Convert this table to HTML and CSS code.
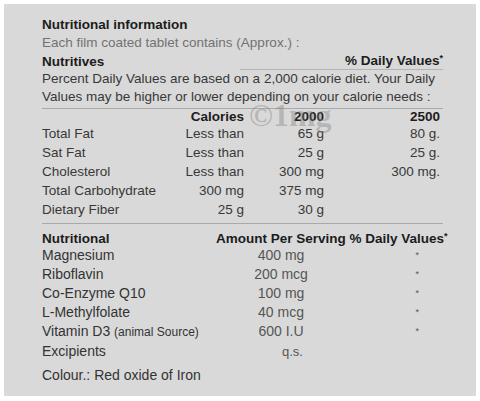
FILE: index.html
```html
<!DOCTYPE html>
<html lang="en">
  <head>
    <meta charset="UTF-8" />
    <meta name="viewport" content="width=device-width, initial-scale=1.0" />
    <title>Nutritional information</title>
    <link rel="stylesheet" href="styles.css">
  </head>
  <body>
    <div class="label">
      <div class="watermark">©1mg</div>

      <!-- Intro -->
      <div class="intro">
        <p class="title">Nutritional information</p>
        <p class="note">Each film coated tablet contains (Approx.) :</p>
        <div class="head-row">
          <span class="bold">Nutritives</span>
          <span class="dv">% Daily Values<span class="star">*</span></span>
        </div>
        <p class="text">Percent Daily Values are based on a 2,000 calorie diet. Your Daily</p>
        <p class="text">Values may be higher or lower depending on your calorie needs :</p>
      </div>

      <!-- Daily values table -->
      <div class="daily">
        <span class="hd"></span>
        <span class="hd num">Calories</span>
        <span class="hd num">2000</span>
        <span class="hd num">2500</span>

        <span class="name">Total Fat</span>
        <span class="num">Less than</span>
        <span class="num">65 g</span>
        <span class="num">80 g.</span>

        <span class="name">Sat Fat</span>
        <span class="num">Less than</span>
        <span class="num">25 g</span>
        <span class="num">25 g.</span>

        <span class="name">Cholesterol</span>
        <span class="num">Less than</span>
        <span class="num">300 mg</span>
        <span class="num">300 mg.</span>

        <span class="name">Total Carbohydrate</span>
        <span class="num">300 mg</span>
        <span class="num">375 mg</span>
        <span class="num"></span>

        <span class="name">Dietary Fiber</span>
        <span class="num">25 g</span>
        <span class="num">30 g</span>
        <span class="num"></span>
      </div>

      <!-- Per serving table -->
      <div class="nutrients">
        <span class="hd">Nutritional</span>
        <span class="hd wide">Amount Per Serving % Daily Values<span class="star">*</span></span>

        <span class="name">Magnesium</span>
        <span class="amt">400 mg</span>
        <span class="pct">*</span>

        <span class="name">Riboflavin</span>
        <span class="amt">200 mcg</span>
        <span class="pct">*</span>

        <span class="name">Co-Enzyme Q10</span>
        <span class="amt">100 mg</span>
        <span class="pct">*</span>

        <span class="name">L-Methylfolate</span>
        <span class="amt">40 mcg</span>
        <span class="pct">*</span>

        <span class="name">Vitamin D3 <small>(animal Source)</small></span>
        <span class="amt">600 I.U</span>
        <span class="pct">*</span>

        <span class="name">Excipients</span>
        <span class="amt qs">q.s.</span>
        <span class="pct"></span>
      </div>

      <p class="colour">Colour.: Red oxide of Iron</p>
    </div>
  </body>
</html>
```

FILE: styles.css
```css
body {
  margin: 0;
  background: #ffffff;
}

p {
  margin: 0;
}

.label {
  position: relative;
  margin: 4px;
  width: 472px;
  height: 392px;
  box-sizing: border-box;
  padding: 12px 33px 0 38px;
  background: #d9d9d9;
  font-family: "Liberation Sans", Arial, sans-serif;
  font-size: 13.5px;
  color: #383838;
}

/* faint photo watermark */
.watermark {
  position: absolute;
  left: 245px;
  top: 95px;
  font-family: "Liberation Serif", serif;
  font-weight: bold;
  font-size: 32px;
  line-height: 32px;
  color: rgba(125, 125, 125, 0.4);
}

.intro {
  line-height: 18px;
}

.title,
.bold {
  font-weight: bold;
  color: #1c1c1c;
}

.note {
  color: #727272;
}

.head-row {
  display: flex;
  justify-content: space-between;
  align-items: flex-end;
  line-height: 17px;
}

.dv {
  width: 203px;
  text-align: right;
  font-weight: bold;
  color: #1c1c1c;
  border-bottom: 1px solid #b4b4b4;
}

.star {
  font-size: 9px;
  line-height: 0;
  vertical-align: 4px;
}

.daily {
  display: grid;
  grid-template-columns: 132px 70px 80px 116px;
  margin-top: 2px;
  padding-bottom: 4px;
  border-top: 1px solid #a9a9a9;
  border-bottom: 1px solid #a9a9a9;
  line-height: 19px;
}

.daily .hd {
  line-height: 15px;
  font-weight: bold;
  color: #1c1c1c;
}

.num {
  text-align: right;
  white-space: nowrap;
}

.nutrients {
  display: grid;
  grid-template-columns: 174px 130px 97px;
  padding-top: 8px;
  font-size: 14px;
  line-height: 19px;
  color: #333333;
}

.nutrients .hd {
  line-height: 14px;
  font-size: 13.5px;
  font-weight: bold;
  color: #1c1c1c;
}

.nutrients .wide {
  grid-column: span 2;
  white-space: nowrap;
}

.name small {
  font-size: 12px;
}

.amt {
  text-align: center;
  color: #555555;
}

.amt.qs {
  text-align: right;
  padding-right: 43px;
  font-size: 13px;
}

.pct {
  text-align: right;
  padding-right: 24px;
  font-size: 9px;
  color: #555555;
}

.colour {
  margin-top: 5px;
  line-height: 19px;
  font-size: 14px;
  color: #333333;
}
```
